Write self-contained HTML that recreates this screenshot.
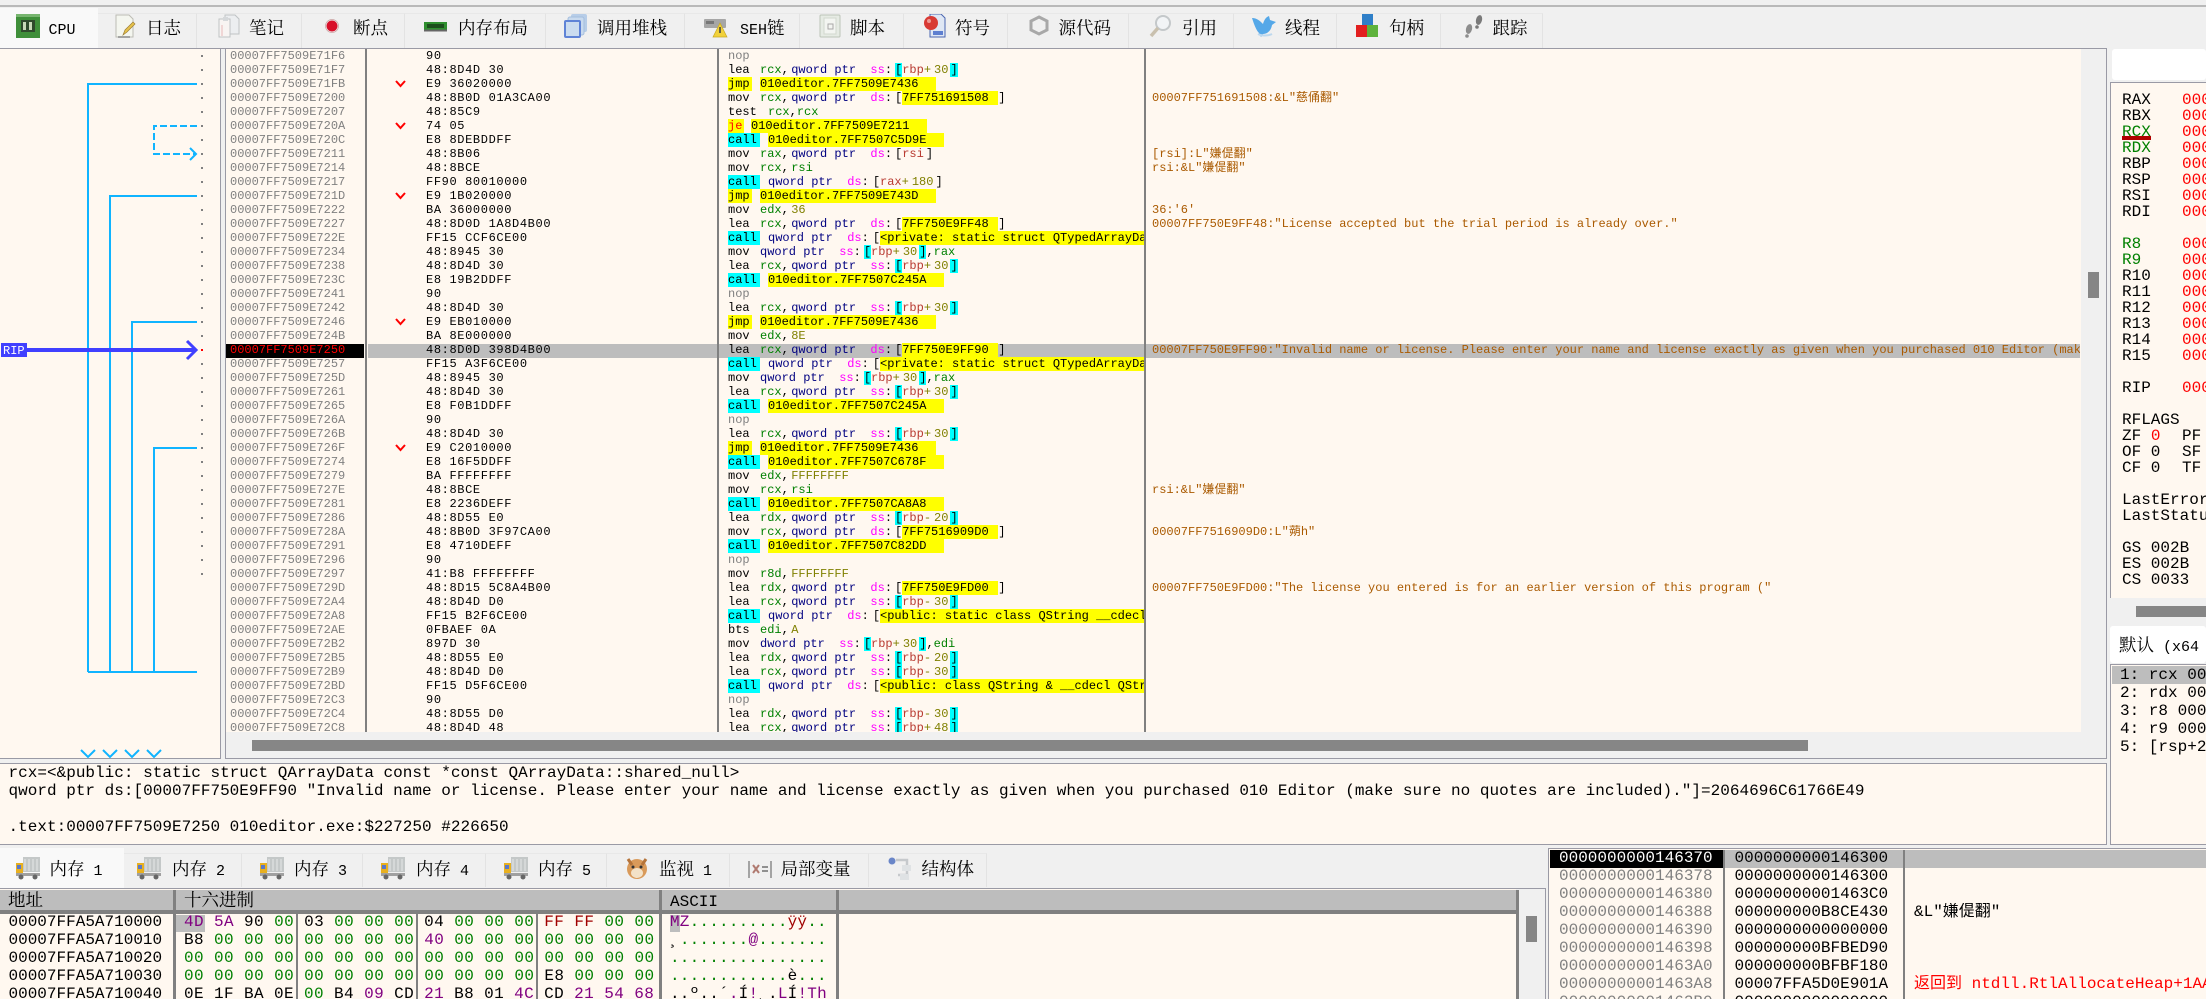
<!DOCTYPE html>
<html lang="zh"><head><meta charset="utf-8"><title>x64dbg</title>
<style>
html,body{margin:0;padding:0;background:#f0f0f0;width:2206px;height:999px;overflow:hidden}
body{position:relative;font-family:"Liberation Mono","Noto Sans CJK SC",monospace;color:#000}
div,pre,span,svg{position:absolute;margin:0}
i,b,u,s,em,a{font-style:normal;font-weight:normal;text-decoration:none;position:static}
.cream{background:#fff8f0}
.ln{background:#9a9aa5}
.sep{background:#808080}
.tab{top:13px;height:35px;background:#f0f0f0;border-right:1px solid #e3e3e3;border-top:1px solid #e8e8e8;box-sizing:border-box}
.tl{font:17.5px/20px "Noto Serif CJK SC",serif;white-space:pre;top:18px}
.tl span{position:static;font:15px/20px "Liberation Mono",monospace}
.bl{top:859px}
.ic{width:24px;height:24px;top:14px}
.bi{top:857px}
.col{top:49px;height:683px;overflow:hidden;white-space:pre;font-size:12px;line-height:14px}
.d{left:728px;width:416px;white-space:normal}
.d p{margin:0;height:14px;white-space:pre;overflow:visible}
.d p span{position:static}
.m{display:inline-block;width:32px}
.nop{color:#808080}
.mj{display:inline-block;width:24px;margin-right:8px;background:#ff0}
.mc{display:inline-block;width:32px;margin-right:8px;background:#0ff}
.me{display:inline-block;width:16px;margin-right:7px;background:#ff0;color:#f00}
.t{display:inline-block;width:176px;background:#ff0}
.y{display:inline-block;width:96px;background:#ff0}
.yy{display:inline-block;width:420px;background:#ff0}
i{color:#008000}
b{color:#000080}
u{color:#f0f}
s{color:#b83a30}
em{color:#808000}
a{margin-right:2.4px}
.bc{background:#0ff;margin-left:3px}
.bb{margin-left:3px}
.b4{margin-left:4px}
.e{margin-left:2px}
.bc2{background:#0ff;margin-left:2px}
.n{margin-left:3px}
.cm{left:1152px;width:928px;height:14px;overflow:hidden;white-space:pre;font-size:12px;line-height:14px;color:#aa5a00}
.big{font-size:16px;line-height:18px;white-space:pre}
.reg{font-size:16px;line-height:16px;white-space:pre}
.p{color:#800080}
.r{color:#a00000}
.cj{height:18px;white-space:pre;font-size:16px;line-height:18px;overflow:hidden}
</style></head><body>

<div style="left:0;top:5px;width:2206px;height:2px;background:#b9b9b9"></div>

<!-- top tabs -->
<div style="left:0;top:8px;width:98px;height:40px;background:#f9f9f9"></div>
<div class="tab" style="left:98px;width:99px"></div>
<div class="tab" style="left:197px;width:105px"></div>
<div class="tab" style="left:302px;width:103px"></div>
<div class="tab" style="left:405px;width:141px"></div>
<div class="tab" style="left:546px;width:139px"></div>
<div class="tab" style="left:685px;width:115px"></div>
<div class="tab" style="left:800px;width:104px"></div>
<div class="tab" style="left:904px;width:104px"></div>
<div class="tab" style="left:1008px;width:121px"></div>
<div class="tab" style="left:1129px;width:105px"></div>
<div class="tab" style="left:1234px;width:103px"></div>
<div class="tab" style="left:1337px;width:104px"></div>
<div class="tab" style="left:1441px;width:102px"></div>

<svg class="ic" style="left:16px" viewBox="0 0 24 24"><rect x="0" y="0" width="24" height="24" fill="#3f8f3a"/><rect x="0" y="0" width="24" height="3" fill="#77b56f"/><rect x="5" y="6" width="14" height="12" fill="#2f4a2c"/><rect x="7" y="8" width="3" height="8" fill="#c8d8b8"/><rect x="13" y="8" width="3" height="8" fill="#c8d8b8"/></svg>
<span class="tl" style="left:48.5px"><span>CPU</span></span>
<svg class="ic" style="left:113px" viewBox="0 0 24 24"><path d="M3 1h13l4 4v18H3z" fill="#f4f6ef" stroke="#bcbcb4"/><path d="M10 21l2-5 8-8 2 2-8 8z" fill="#e6c24a" stroke="#9c7d35" stroke-width=".7"/><path d="M5 23h12" stroke="#888" stroke-width="1.5"/></svg>
<span class="tl" style="left:146px">日志</span>
<svg class="ic" style="left:217px" viewBox="0 0 24 24"><path d="M8 1h10l4 4v15H8z" fill="#eceef0" stroke="#bfc3c5"/><path d="M2 5h11v18H2z" fill="#f8f4f2" stroke="#bfc3c5"/><path d="M6 3h5v4H6z" fill="#d5d8da"/><path d="M5 11v11" stroke="#e8b8b8"/></svg>
<span class="tl" style="left:249px">笔记</span>
<svg class="ic" style="left:320px" viewBox="0 0 24 24"><circle cx="12" cy="12" r="5.5" fill="#d8102a"/><circle cx="12" cy="12" r="6.5" fill="none" stroke="#c9a0a0" stroke-width=".7"/></svg>
<span class="tl" style="left:353px">断点</span>
<svg class="ic" style="left:424px" viewBox="0 0 24 24"><rect x="0" y="8" width="23" height="9" fill="#2f8f2f"/><rect x="3" y="10" width="17" height="4" fill="#1d4f1d"/><rect x="0" y="15.500" width="23" height="2" fill="#666"/></svg>
<span class="tl" style="left:458px">内存布局</span>
<svg class="ic" style="left:564px" viewBox="0 0 24 24"><rect x="7" y="0" width="16" height="18" rx="2" fill="#b7cde8"/><rect x="4" y="3" width="16" height="18" rx="2" fill="#c9daee" stroke="#a4bedd"/><rect x="1" y="7" width="15" height="16" rx="1" fill="#cbdcef" stroke="#5f83d6" stroke-width="2"/></svg>
<span class="tl" style="left:597px">调用堆栈</span>
<svg class="ic" style="left:704px" viewBox="0 0 24 24"><rect x="0" y="5" width="22" height="9" rx="1" fill="#a6a6a6"/><rect x="2" y="7" width="8" height="3" fill="#777"/><path d="M16 9l7 14H9z" fill="#f1d13a" stroke="#c8a820" stroke-width=".7"/><path d="M16 13v6" stroke="#444" stroke-width="1.6"/></svg>
<span class="tl" style="left:740px"><span>SEH</span>链</span>
<svg class="ic" style="left:818px" viewBox="0 0 24 24"><rect x="2" y="1" width="20" height="22" rx="1" fill="#e6ebe4" stroke="#bcc4b8"/><rect x="6" y="4" width="12" height="16" fill="#f3f5f1" stroke="#d2d8ce"/><rect x="10" y="10" width="5" height="5" fill="none" stroke="#a8a8a8"/></svg>
<span class="tl" style="left:850px">脚本</span>
<svg class="ic" style="left:923px" viewBox="0 0 24 24"><path d="M7 0h11l4 4v19H7z" fill="#dfe7f4" stroke="#4a66b0"/><path d="M10 17h10v4H10z" fill="#5d7fd0"/><circle cx="8" cy="9" r="7" fill="#d83a34"/><circle cx="6" cy="7" r="2" fill="#ee9a94"/></svg>
<span class="tl" style="left:955px">符号</span>
<svg class="ic" style="left:1027px" viewBox="0 0 24 24"><path d="M12 3l8 4v9l-8 4-8-4V7z" fill="none" stroke="#a8a8a8" stroke-width="3"/></svg>
<span class="tl" style="left:1058.5px">源代码</span>
<svg class="ic" style="left:1149px" viewBox="0 0 24 24"><circle cx="14" cy="9" r="7" fill="#f2f4f6" stroke="#c4c8ca" stroke-width="2"/><path d="M9 14L2 22" stroke="#c9c0ae" stroke-width="3.500"/></svg>
<span class="tl" style="left:1182px">引用</span>
<svg class="ic" style="left:1252px" viewBox="0 0 24 24"><path d="M0 4c5 0 8 3 11 6 1-4 3-7 6-8l1 4 6 2-4 3c-1 6-5 9-9 9l-2 3-2-4C4 16 2 10 0 4z" fill="#55a8e8"/><path d="M6 20c4 2 10 2 14 0" stroke="#bcd8ee" stroke-width="2" fill="none"/></svg>
<span class="tl" style="left:1285px">线程</span>
<svg class="ic" style="left:1356px" viewBox="0 0 24 24"><rect x="6" y="0" width="11" height="12" fill="#2f7fc8"/><rect x="0" y="11" width="11" height="12" fill="#e21f1f"/><rect x="11" y="11" width="11" height="12" fill="#5eb23c"/></svg>
<span class="tl" style="left:1389px">句柄</span>
<svg class="ic" style="left:1462px" viewBox="0 0 24 24"><ellipse cx="7" cy="15" rx="3" ry="5" fill="#8d8d8d" transform="rotate(15 7 15)"/><circle cx="5" cy="22" r="1.800" fill="#8d8d8d"/><ellipse cx="17" cy="6" rx="3" ry="5" fill="#7a7a7a" transform="rotate(15 17 6)"/><circle cx="15" cy="13" r="1.800" fill="#7a7a7a"/></svg>
<span class="tl" style="left:1492.5px">跟踪</span>

<!-- main frame -->
<div class="ln" style="left:0;top:48px;width:2106px;height:1px"></div>
<div class="cream" style="left:0;top:49px;width:220px;height:709px"></div>
<div class="ln" style="left:220px;top:48px;width:1px;height:711px"></div>
<div class="ln" style="left:225px;top:48px;width:1px;height:711px"></div>
<div class="cream" style="left:226px;top:49px;width:1855px;height:683px"></div>
<div class="ln" style="left:0;top:758px;width:220px;height:1px"></div>
<div class="ln" style="left:225px;top:758px;width:1881px;height:1px"></div>
<div class="ln" style="left:2106px;top:48px;width:1px;height:711px"></div>

<!-- current row -->
<div style="left:368px;top:344px;width:1712px;height:14px;background:#bdbdbd"></div>
<div style="left:226px;top:344px;width:138px;height:14px;background:#000"></div>

<!-- graph -->
<svg style="left:0;top:0" width="222" height="760" viewBox="0 0 222 760">
<path d="M197 84H88V672M197 196H110V672M197 322H132V672M197 448H154V672M88 672H197" fill="none" stroke="#10b4ff" stroke-width="2"/>
<path d="M197 126H154V154H196" fill="none" stroke="#10b4ff" stroke-width="2" stroke-dasharray="7 3"/>
<path d="M190 148l6 6-6 6" fill="none" stroke="#10b4ff" stroke-width="2"/>
<path d="M81 750l7 7 7-7M103 750l7 7 7-7M125 750l7 7 7-7M147 750l7 7 7-7" fill="none" stroke="#10b4ff" stroke-width="2"/>
<path d="M202 55V575" stroke="#808080" stroke-width="2" stroke-dasharray="2 12"/>
<rect x="201" y="349" width="2" height="2" fill="#f00"/>
<path d="M27 350H194" stroke="#4040ff" stroke-width="4"/>
<path d="M187 341l9 9-9 9" fill="none" stroke="#4040ff" stroke-width="3"/>
<rect x="1" y="343" width="26" height="14" fill="#4040ff"/>
<text x="3" y="354" font-family="Liberation Mono" font-size="12" fill="#fff">RIP</text>
</svg>

<!-- addresses -->
<pre class="col" style="left:230px;width:134px;color:#808080;font-family:inherit">00007FF7509E71F6
00007FF7509E71F7
00007FF7509E71FB
00007FF7509E7200
00007FF7509E7207
00007FF7509E720A
00007FF7509E720C
00007FF7509E7211
00007FF7509E7214
00007FF7509E7217
00007FF7509E721D
00007FF7509E7222
00007FF7509E7227
00007FF7509E722E
00007FF7509E7234
00007FF7509E7238
00007FF7509E723C
00007FF7509E7241
00007FF7509E7242
00007FF7509E7246
00007FF7509E724B
<em style="color:#f00">00007FF7509E7250</em>
00007FF7509E7257
00007FF7509E725D
00007FF7509E7261
00007FF7509E7265
00007FF7509E726A
00007FF7509E726B
00007FF7509E726F
00007FF7509E7274
00007FF7509E7279
00007FF7509E727E
00007FF7509E7281
00007FF7509E7286
00007FF7509E728A
00007FF7509E7291
00007FF7509E7296
00007FF7509E7297
00007FF7509E729D
00007FF7509E72A4
00007FF7509E72A8
00007FF7509E72AE
00007FF7509E72B2
00007FF7509E72B5
00007FF7509E72B9
00007FF7509E72BD
00007FF7509E72C3
00007FF7509E72C4
00007FF7509E72C8</pre>

<!-- jump chevrons -->
<svg style="left:390px;top:70px" width="20" height="400" viewBox="0 0 20 400">
<path d="M6 11l4.500 5 4.500-5M6 53l4.500 5 4.500-5M6 123l4.500 5 4.500-5M6 249l4.500 5 4.500-5M6 375l4.500 5 4.500-5" fill="none" stroke="#f00" stroke-width="2"/>
</svg>

<!-- bytes -->
<pre class="col" style="left:426px;width:285px;letter-spacing:.62px;font-family:inherit">90
48:8D4D 30
E9 36020000
48:8B0D 01A3CA00
48:85C9
74 05
E8 8DEBDDFF
48:8B06
48:8BCE
FF90 80010000
E9 1B020000
BA 36000000
48:8D0D 1A8D4B00
FF15 CCF6CE00
48:8945 30
48:8D4D 30
E8 19B2DDFF
90
48:8D4D 30
E9 EB010000
BA 8E000000
48:8D0D 398D4B00
FF15 A3F6CE00
48:8945 30
48:8D4D 30
E8 F0B1DDFF
90
48:8D4D 30
E9 C2010000
E8 16F5DDFF
BA FFFFFFFF
48:8BCE
E8 2236DEFF
48:8D55 E0
48:8B0D 3F97CA00
E8 4710DEFF
90
41:B8 FFFFFFFF
48:8D15 5C8A4B00
48:8D4D D0
FF15 B2F6CE00
0FBAEF 0A
897D 30
48:8D55 E0
48:8D4D D0
FF15 D5F6CE00
90
48:8D55 D0
48:8D4D 48</pre>

<!-- disassembly -->
<div class="col d">
<p><span class="m nop">nop</span></p>
<p><span class="m">lea</span><i>rcx</i><a>,</a><b>qword ptr  </b><u>ss</u>:<span class="bc">[</span><s>rbp</s><em>+</em><em class="n">30</em><span class="bc2">]</span></p>
<p><span class="mj">jmp</span><span class="t">010editor.7FF7509E7436</span></p>
<p><span class="m">mov</span><i>rcx</i><a>,</a><b>qword ptr  </b><u>ds</u>:<span class="bb">[</span><span class="y">7FF751691508</span>]</p>
<p><span class="m" style="width:40px">test</span><i>rcx</i>,<i>rcx</i></p>
<p><span class="me">je</span><span class="t">010editor.7FF7509E7211</span></p>
<p><span class="mc">call</span><span class="t">010editor.7FF7507C5D9E</span></p>
<p><span class="m">mov</span><i>rax</i><a>,</a><b>qword ptr  </b><u>ds</u>:<span class="bb">[</span><s>rsi</s><span class="e">]</span></p>
<p><span class="m">mov</span><i>rcx</i><a>,</a><i>rsi</i></p>
<p><span class="mc">call</span><b>qword ptr  </b><u>ds</u>:<span class="b4">[</span><s>rax</s><em>+</em><em class="n">180</em><span class="e">]</span></p>
<p><span class="mj">jmp</span><span class="t">010editor.7FF7509E743D</span></p>
<p><span class="m">mov</span><i>edx</i><a>,</a><em>36</em></p>
<p><span class="m">lea</span><i>rcx</i><a>,</a><b>qword ptr  </b><u>ds</u>:<span class="bb">[</span><span class="y">7FF750E9FF48</span>]</p>
<p><span class="mc">call</span><b>qword ptr  </b><u>ds</u>:<span class="b4">[</span><span class="yy">&lt;private: static struct QTypedArrayData</span></p>
<p><span class="m">mov</span><b>qword ptr  </b><u>ss</u>:<span class="bc">[</span><s>rbp</s><em>+</em><em class="n">30</em><span class="bc2">]</span>,<i>rax</i></p>
<p><span class="m">lea</span><i>rcx</i><a>,</a><b>qword ptr  </b><u>ss</u>:<span class="bc">[</span><s>rbp</s><em>+</em><em class="n">30</em><span class="bc2">]</span></p>
<p><span class="mc">call</span><span class="t">010editor.7FF7507C245A</span></p>
<p><span class="m nop">nop</span></p>
<p><span class="m">lea</span><i>rcx</i><a>,</a><b>qword ptr  </b><u>ss</u>:<span class="bc">[</span><s>rbp</s><em>+</em><em class="n">30</em><span class="bc2">]</span></p>
<p><span class="mj">jmp</span><span class="t">010editor.7FF7509E7436</span></p>
<p><span class="m">mov</span><i>edx</i><a>,</a><em>8E</em></p>
<p><span class="m">lea</span><i>rcx</i><a>,</a><b>qword ptr  </b><u>ds</u>:<span class="bb">[</span><span class="y">7FF750E9FF90</span>]</p>
<p><span class="mc">call</span><b>qword ptr  </b><u>ds</u>:<span class="b4">[</span><span class="yy">&lt;private: static struct QTypedArrayData</span></p>
<p><span class="m">mov</span><b>qword ptr  </b><u>ss</u>:<span class="bc">[</span><s>rbp</s><em>+</em><em class="n">30</em><span class="bc2">]</span>,<i>rax</i></p>
<p><span class="m">lea</span><i>rcx</i><a>,</a><b>qword ptr  </b><u>ss</u>:<span class="bc">[</span><s>rbp</s><em>+</em><em class="n">30</em><span class="bc2">]</span></p>
<p><span class="mc">call</span><span class="t">010editor.7FF7507C245A</span></p>
<p><span class="m nop">nop</span></p>
<p><span class="m">lea</span><i>rcx</i><a>,</a><b>qword ptr  </b><u>ss</u>:<span class="bc">[</span><s>rbp</s><em>+</em><em class="n">30</em><span class="bc2">]</span></p>
<p><span class="mj">jmp</span><span class="t">010editor.7FF7509E7436</span></p>
<p><span class="mc">call</span><span class="t">010editor.7FF7507C678F</span></p>
<p><span class="m">mov</span><i>edx</i><a>,</a><em>FFFFFFFF</em></p>
<p><span class="m">mov</span><i>rcx</i><a>,</a><i>rsi</i></p>
<p><span class="mc">call</span><span class="t">010editor.7FF7507CA8A8</span></p>
<p><span class="m">lea</span><i>rdx</i><a>,</a><b>qword ptr  </b><u>ss</u>:<span class="bc">[</span><s>rbp</s><em>-</em><em class="n">20</em><span class="bc2">]</span></p>
<p><span class="m">mov</span><i>rcx</i><a>,</a><b>qword ptr  </b><u>ds</u>:<span class="bb">[</span><span class="y">7FF7516909D0</span>]</p>
<p><span class="mc">call</span><span class="t">010editor.7FF7507C82DD</span></p>
<p><span class="m nop">nop</span></p>
<p><span class="m">mov</span><i>r8d</i><a>,</a><em>FFFFFFFF</em></p>
<p><span class="m">lea</span><i>rdx</i><a>,</a><b>qword ptr  </b><u>ds</u>:<span class="bb">[</span><span class="y">7FF750E9FD00</span>]</p>
<p><span class="m">lea</span><i>rcx</i><a>,</a><b>qword ptr  </b><u>ss</u>:<span class="bc">[</span><s>rbp</s><em>-</em><em class="n">30</em><span class="bc2">]</span></p>
<p><span class="mc">call</span><b>qword ptr  </b><u>ds</u>:<span class="b4">[</span><span class="yy">&lt;public: static class QString __cdecl QString</span></p>
<p><span class="m">bts</span><i>edi</i><a>,</a><em>A</em></p>
<p><span class="m">mov</span><b>dword ptr  </b><u>ss</u>:<span class="bc">[</span><s>rbp</s><em>+</em><em class="n">30</em><span class="bc2">]</span>,<i>edi</i></p>
<p><span class="m">lea</span><i>rdx</i><a>,</a><b>qword ptr  </b><u>ss</u>:<span class="bc">[</span><s>rbp</s><em>-</em><em class="n">20</em><span class="bc2">]</span></p>
<p><span class="m">lea</span><i>rcx</i><a>,</a><b>qword ptr  </b><u>ss</u>:<span class="bc">[</span><s>rbp</s><em>-</em><em class="n">30</em><span class="bc2">]</span></p>
<p><span class="mc">call</span><b>qword ptr  </b><u>ds</u>:<span class="b4">[</span><span class="yy">&lt;public: class QString &amp; __cdecl QString</span></p>
<p><span class="m nop">nop</span></p>
<p><span class="m">lea</span><i>rdx</i><a>,</a><b>qword ptr  </b><u>ss</u>:<span class="bc">[</span><s>rbp</s><em>-</em><em class="n">30</em><span class="bc2">]</span></p>
<p><span class="m">lea</span><i>rcx</i><a>,</a><b>qword ptr  </b><u>ss</u>:<span class="bc">[</span><s>rbp</s><em>+</em><em class="n">48</em><span class="bc2">]</span></p>
</div>

<!-- comments -->
<div class="cm" style="top:91px">00007FF751691508:&amp;L"慈俑翻"</div>
<div class="cm" style="top:147px">[rsi]:L"嫌偍翻"</div>
<div class="cm" style="top:161px">rsi:&amp;L"嫌偍翻"</div>
<div class="cm" style="top:203px">36:'6'</div>
<div class="cm" style="top:217px">00007FF750E9FF48:"License accepted but the trial period is already over."</div>
<div class="cm" style="top:343px;height:15px">00007FF750E9FF90:"Invalid name or license. Please enter your name and license exactly as given when you purchased 010 Editor (make sure no quotes are included)."</div>
<div class="cm" style="top:483px">rsi:&amp;L"嫌偍翻"</div>
<div class="cm" style="top:525px">00007FF7516909D0:L"蒴h"</div>
<div class="cm" style="top:581px">00007FF750E9FD00:"The license you entered is for an earlier version of this program ("</div>

<!-- column separators -->
<div class="sep" style="left:365px;top:49px;width:2px;height:683px"></div>
<div class="sep" style="left:717px;top:49px;width:2px;height:683px"></div>
<div class="sep" style="left:1144px;top:49px;width:2px;height:683px"></div>

<!-- scrollbars -->
<div style="left:2088px;top:272px;width:11px;height:26px;background:#868686"></div>
<div style="left:252px;top:740px;width:1556px;height:11px;background:#868686"></div>

<!-- info pane -->
<div class="cream" style="left:0;top:763px;width:2106px;height:81px"></div>
<div class="ln" style="left:0;top:763px;width:2107px;height:1px"></div>
<div class="ln" style="left:0;top:844px;width:2107px;height:1px"></div>
<div class="ln" style="left:2106px;top:763px;width:1px;height:82px"></div>
<pre class="big" style="left:8.5px;top:764px;width:2090px;font-family:inherit;letter-spacing:.015px">rcx=&lt;&amp;public: static struct QArrayData const *const QArrayData::shared_null&gt;
qword ptr ds:[00007FF750E9FF90 "Invalid name or license. Please enter your name and license exactly as given when you purchased 010 Editor (make sure no quotes are included)."]=2064696C61766E49

.text:00007FF7509E7250 010editor.exe:$227250 #226650</pre>

<!-- registers -->
<div style="left:2112px;top:49px;width:94px;height:31px;background:#fff;border-radius:3px"></div>
<div class="cream" style="left:2111px;top:83px;width:95px;height:515px"></div>
<div class="ln" style="left:2110px;top:82px;width:96px;height:1px"></div>
<div class="ln" style="left:2110px;top:82px;width:1px;height:516px"></div>
<pre class="reg" style="left:2122px;top:92px;width:84px;height:504px;overflow:hidden;font-family:inherit">RAX
RBX
<i>RCX</i>
<i>RDX</i>
RBP
RSP
RSI
RDI

<i>R8</i>
<i>R9</i>
R10
R11
R12
R13
R14
R15

RIP

RFLAGS
ZF <em style="color:#f00">0</em>
OF 0
CF 0

LastError
LastStatus

GS 002B
ES 002B
CS 0033</pre>
<div style="left:2122px;top:136px;width:29px;height:4px;background:#b00000"></div>
<pre class="reg" style="left:2182px;top:92px;width:24px;height:504px;overflow:hidden;color:#f00;font-family:inherit">00000000
00000000
00000000
00000000
00000000
00000000
00000000
00000000

00000000
00000000
00000000
00000000
00000000
00000000
00000000
00000000

00000000


<em style="color:#000">PF</em>
<em style="color:#000">SF</em>
<em style="color:#000">TF</em></pre>
<div style="left:2136px;top:606px;width:70px;height:11px;background:#868686"></div>

<!-- arguments -->
<div style="left:2110px;top:626px;width:96px;height:37px;background:#fff;border-radius:3px"></div>
<span class="tl" style="left:2119px;top:635px">默认<span> (x64</span></span>
<div class="cream" style="left:2111px;top:665px;width:95px;height:179px"></div>
<div class="ln" style="left:2110px;top:664px;width:96px;height:1px"></div>
<div class="ln" style="left:2110px;top:664px;width:1px;height:181px"></div>
<div class="ln" style="left:2110px;top:844px;width:96px;height:1px"></div>
<div style="left:2112px;top:666px;width:94px;height:18px;background:#bdbdbd"></div>
<pre class="big" style="left:2120px;top:666px;width:86px;overflow:hidden;font-family:inherit">1: rcx 0000
2: rdx 0000
3: r8 00000
4: r9 00000
5: [rsp+28]</pre>

<!-- bottom tabs -->
<div style="left:0;top:848px;width:124px;height:40px;background:#f9f9f9"></div>
<div class="tab" style="left:124px;top:853px;width:118px;height:34px"></div>
<div class="tab" style="left:242px;top:853px;width:121px;height:34px"></div>
<div class="tab" style="left:363px;top:853px;width:123px;height:34px"></div>
<div class="tab" style="left:486px;top:853px;width:121px;height:34px"></div>
<div class="tab" style="left:607px;top:853px;width:123px;height:34px"></div>
<div class="tab" style="left:730px;top:853px;width:139px;height:34px"></div>
<div class="tab" style="left:869px;top:853px;width:118px;height:34px"></div>

<svg width="0" height="0" style="left:0;top:0"><defs>
<g id="trk"><rect x="7" y="0" width="17" height="15" fill="#c4c8c8"/><path d="M9 2v12M13 2v12M17 2v12M21 2v12" stroke="#e6e8e8"/><path d="M0 6h7v11H0z" fill="#e8b020"/><rect x="1" y="8" width="4" height="4" fill="#5a78c8"/><rect x="0" y="16" width="24" height="3" fill="#a0a0a0"/><circle cx="5" cy="20" r="2.500" fill="#666"/><circle cx="19" cy="20" r="2.500" fill="#666"/></g>
</defs></svg>

<svg class="ic bi" style="left:16px" viewBox="0 0 24 24"><use href="#trk"/></svg>
<span class="tl bl" style="left:49.5px">内存<span> 1</span></span>
<svg class="ic bi" style="left:137px" viewBox="0 0 24 24"><use href="#trk"/></svg>
<span class="tl bl" style="left:172px">内存<span> 2</span></span>
<svg class="ic bi" style="left:259.5px" viewBox="0 0 24 24"><use href="#trk"/></svg>
<span class="tl bl" style="left:294px">内存<span> 3</span></span>
<svg class="ic bi" style="left:381px" viewBox="0 0 24 24"><use href="#trk"/></svg>
<span class="tl bl" style="left:416px">内存<span> 4</span></span>
<svg class="ic bi" style="left:503.5px" viewBox="0 0 24 24"><use href="#trk"/></svg>
<span class="tl bl" style="left:538px">内存<span> 5</span></span>
<svg class="ic bi" style="left:625px" viewBox="0 0 24 24"><circle cx="12" cy="12" r="10" fill="#d99a5a"/><path d="M3 2l4 6M21 2l-4 6" stroke="#b5743a" stroke-width="3"/><ellipse cx="12" cy="16" rx="6" ry="5" fill="#f3e2c8"/><circle cx="8" cy="10" r="1.500" fill="#333"/><circle cx="16" cy="10" r="1.500" fill="#333"/></svg>
<span class="tl bl" style="left:659px">监视<span> 1</span></span>
<svg class="ic bi" style="left:748px" viewBox="0 0 24 24"><path d="M1 4v17M23 4v17" stroke="#8a8a8a" stroke-width="1.500"/><path d="M5 8l6 8M11 8l-6 8" stroke="#b07a70" stroke-width="2"/><path d="M14 10h6M14 14h6" stroke="#909090" stroke-width="2"/></svg>
<span class="tl bl" style="left:780.5px">局部变量</span>
<svg class="ic bi" style="left:888px" viewBox="0 0 24 24"><circle cx="4" cy="4" r="3.500" fill="#6a86c8"/><path d="M8 3h11v7M19 10v8H10" fill="none" stroke="#c6c9cc" stroke-width="2.500"/><rect x="14" y="8" width="9" height="6" fill="#dfe2e4"/><rect x="12" y="17" width="9" height="6" fill="#dfe2e4"/></svg>
<span class="tl bl" style="left:921.5px">结构体</span>

<!-- dump -->
<div class="ln" style="left:0;top:888px;width:1546px;height:1px"></div>
<div class="cream" style="left:0;top:889px;width:1516px;height:110px"></div>
<div style="left:0;top:890px;width:1516px;height:20px;background:#bdbdbd"></div>
<div class="sep" style="left:0;top:910px;width:1519px;height:4px"></div>
<div class="sep" style="left:173px;top:890px;width:3px;height:109px"></div>
<div class="sep" style="left:659px;top:890px;width:3px;height:109px"></div>
<div class="sep" style="left:836px;top:890px;width:3px;height:109px"></div>
<div class="sep" style="left:1516px;top:890px;width:3px;height:109px"></div>
<div class="ln" style="left:1545px;top:888px;width:1px;height:111px"></div>
<div style="left:1526px;top:916px;width:11px;height:26px;background:#868686"></div>
<div class="sep" style="left:296px;top:914px;width:2px;height:85px"></div>
<div class="sep" style="left:416px;top:914px;width:2px;height:85px"></div>
<div class="sep" style="left:536px;top:914px;width:2px;height:85px"></div>
<span class="tl" style="left:8px;top:890px">地址</span>
<span class="tl" style="left:184px;top:890px">十六进制</span>
<span class="tl" style="left:670px;top:890px"><span style="font-size:16px">ASCII</span></span>
<div style="left:176px;top:915px;width:29px;height:17px;background:#bdbdbd"></div>
<div style="left:670px;top:915px;width:10px;height:17px;background:#bdbdbd"></div>
<pre class="big" style="left:8.5px;top:913px;height:86px;overflow:hidden;font-family:inherit">00007FFA5A710000
00007FFA5A710010
00007FFA5A710020
00007FFA5A710030
00007FFA5A710040</pre>
<pre class="big" style="left:184px;top:913px;height:86px;width:475px;overflow:hidden;letter-spacing:.4px;font-family:inherit"><em class="p">4D</em> <em class="p">5A</em> 90 <i>00</i> 03 <i>00</i> <i>00</i> <i>00</i> 04 <i>00</i> <i>00</i> <i>00</i> <em class="r">FF</em> <em class="r">FF</em> <i>00</i> <i>00</i>
B8 <i>00</i> <i>00</i> <i>00</i> <i>00</i> <i>00</i> <i>00</i> <i>00</i> <em class="p">40</em> <i>00</i> <i>00</i> <i>00</i> <i>00</i> <i>00</i> <i>00</i> <i>00</i>
<i>00</i> <i>00</i> <i>00</i> <i>00</i> <i>00</i> <i>00</i> <i>00</i> <i>00</i> <i>00</i> <i>00</i> <i>00</i> <i>00</i> <i>00</i> <i>00</i> <i>00</i> <i>00</i>
<i>00</i> <i>00</i> <i>00</i> <i>00</i> <i>00</i> <i>00</i> <i>00</i> <i>00</i> <i>00</i> <i>00</i> <i>00</i> <i>00</i> E8 <i>00</i> <i>00</i> <i>00</i>
0E 1F BA 0E <i>00</i> B4 <em class="p">09</em> CD <em class="p">21</em> B8 01 <em class="p">4C</em> CD <em class="p">21</em> <em class="p">54</em> <em class="p">68</em></pre>
<pre class="big" style="left:670px;top:913px;height:86px;width:166px;overflow:hidden;letter-spacing:.2px;font-family:inherit"><em class="p">MZ</em><i>..........</i><em class="r">ÿÿ</em><i>..</i>
¸<i>.......</i><em class="p">@</em><i>.......</i>
<i>................</i>
<i>............</i>è<i>...</i>
..º..´<em class="p">.</em>Í<em class="p">!</em>¸.<em class="p">L</em>Í<em class="p">!Th</em></pre>

<!-- stack -->
<div class="cream" style="left:1549px;top:849px;width:657px;height:150px"></div>
<div class="ln" style="left:1548px;top:848px;width:658px;height:1px"></div>
<div class="ln" style="left:1548px;top:848px;width:1px;height:151px"></div>
<div style="left:1550px;top:850px;width:173px;height:18px;background:#000"></div>
<div style="left:1725px;top:850px;width:481px;height:18px;background:#bdbdbd"></div>
<div class="sep" style="left:1723px;top:850px;width:2px;height:149px"></div>
<div class="sep" style="left:1903px;top:850px;width:2px;height:149px"></div>
<pre class="big" style="left:1559px;top:849px;height:150px;overflow:hidden;color:#808080;font-family:inherit"><em style="color:#fff">0000000000146370</em>
0000000000146378
0000000000146380
0000000000146388
0000000000146390
0000000000146398
00000000001463A0
00000000001463A8
00000000001463B0</pre>
<pre class="big" style="left:1734.5px;top:849px;height:150px;overflow:hidden;font-family:inherit">0000000000146300
0000000000146300
00000000001463C0
000000000B8CE430
0000000000000000
000000000BFBED90
000000000BFBF180
00007FFA5D0E901A
0000000000000000</pre>
<div class="cj" style="left:1914px;top:903px;width:290px">&amp;L"嫌偍翻"</div>
<div class="cj" style="left:1914px;top:975px;width:292px;color:#f00">返回到 ntdll.RtlAllocateHeap+1AA</div>

</body></html>
